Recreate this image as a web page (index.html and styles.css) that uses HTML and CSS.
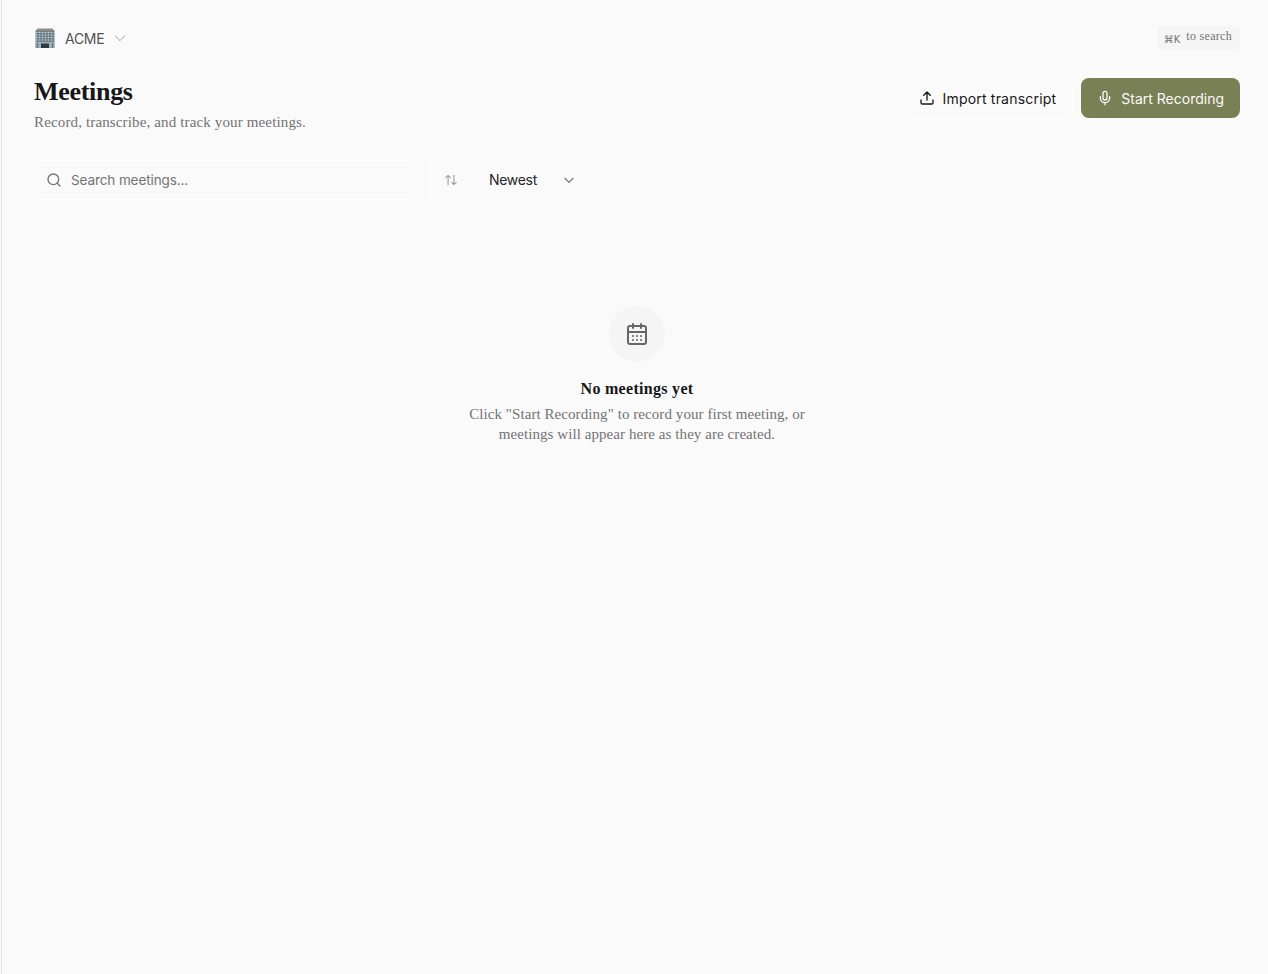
FILE: index.html
```html
<!DOCTYPE html>
<html lang="en">
<head>
    <meta charset="UTF-8">
    <meta name="viewport" content="width=device-width, initial-scale=1.0">
    <title>Meetings</title>
    <link rel="stylesheet" href="styles.css">
</head>
<body>
    <div class="main">
        <div class="topbar">
            <div class="workspace">
                <svg class="building" width="22" height="20" viewBox="0 0 22 20">
                    <rect x="1.5" y="2" width="19" height="18" fill="#7d8c96"/>
                    <rect x="3" y="0.5" width="16" height="2" fill="#948b80"/>
                    <path d="M2 4.5h18M2 7h18M2 9.5h18M2 12h18" stroke="#c3d3dc" stroke-width="1"/>
                    <path d="M4 3v11M7 3v11M10 3v11M13 3v11M16 3v11M19 3v11" stroke="#5b6a73" stroke-width="1"/>
                    <rect x="1.5" y="14" width="19" height="6" fill="#a3b2ba"/>
                    <path d="M3.5 15v5M18.5 15v5" stroke="#66757e" stroke-width="1.5"/>
                    <rect x="7" y="15.5" width="8" height="4.5" fill="#2f3a40"/>
                </svg>
                <span class="workspace-name">ACME</span>
                <svg class="icon chevron-light" width="16" height="16" viewBox="0 0 24 24"><path d="m5 9 7 7 7-7"/></svg>
            </div>
            <div class="search-hint"><span class="keys">⌘K</span> to search</div>
        </div>

        <div class="page-head">
            <div>
                <h1>Meetings</h1>
                <p class="subtitle">Record, transcribe, and track your meetings.</p>
            </div>
            <div class="actions">
                <button class="btn btn-outline">
                    <svg class="icon" width="16" height="16" viewBox="0 0 24 24"><path d="M12 15V3M7 8l5-5 5 5M3 15v4a2 2 0 0 0 2 2h14a2 2 0 0 0 2-2v-4"/></svg>
                    Import transcript
                </button>
                <button class="btn btn-primary">
                    <svg class="icon" width="16" height="16" viewBox="0 0 24 24"><rect x="9" y="2" width="6" height="13" rx="3"/><path d="M19 10v2a7 7 0 0 1-14 0v-2M12 19v3"/></svg>
                    Start Recording
                </button>
            </div>
        </div>

        <div class="filters">
            <div class="search-box">
                <svg class="icon icon-grey" width="16" height="16" viewBox="0 0 24 24"><circle cx="11" cy="11" r="8"/><path d="m21 21-4.3-4.3"/></svg>
                <span class="placeholder">Search meetings...</span>
            </div>
            <div class="sort">
                <svg class="icon icon-light" width="14" height="14" viewBox="0 0 24 24"><path d="M7 20V4M3 8l4-4 4 4M17 4v16M13 16l4 4 4-4"/></svg>
                <span class="sort-label">Newest</span>
                <svg class="icon icon-grey" width="14" height="14" viewBox="0 0 24 24"><path d="m5 9 7 7 7-7"/></svg>
            </div>
        </div>

        <div class="empty">
            <div class="empty-icon">
                <svg class="icon" width="24" height="24" viewBox="0 0 24 24"><path d="M8 2v4M16 2v4"/><rect x="3" y="4" width="18" height="18" rx="2"/><path d="M3 10h18M8 14h.01M12 14h.01M16 14h.01M8 18h.01M12 18h.01M16 18h.01"/></svg>
            </div>
            <h2>No meetings yet</h2>
            <p>Click "Start Recording" to record your first meeting, or<br>meetings will appear here as they are created.</p>
        </div>
    </div>
</body>
</html>
```

FILE: styles.css
```css
html, body {
    height: 100%;
}
body {
    margin: 0;
    background-color: #fafafa;
    font-family: Inter, "Liberation Sans", sans-serif;
    color: #171717;
}
.main {
    box-sizing: border-box;
    height: 100%;
    margin-left: 1px;
    border-left: 1px solid #e5e5e5;
    padding: 26px 28px 0 32px;
}
.icon {
    fill: none;
    stroke: currentColor;
    stroke-width: 2;
    stroke-linecap: round;
    stroke-linejoin: round;
    flex-shrink: 0;
}
.icon-grey {
    color: #737373;
}
.icon-light {
    color: #a3a3a3;
}
.topbar {
    display: flex;
    justify-content: space-between;
    align-items: flex-start;
    height: 52px;
}
.workspace {
    display: flex;
    align-items: center;
    height: 24px;
}
.building {
    margin-right: 9px;
}
.workspace-name {
    font-size: 14px;
    letter-spacing: -0.3px;
    color: #525252;
    margin-right: 8px;
}
.chevron-light {
    color: #a3a3a3;
    stroke-width: 1.5;
}
.search-hint {
    display: flex;
    align-items: center;
    height: 24px;
    padding: 0 8px 3px 7px;
    box-sizing: border-box;
    border-radius: 6px;
    background: #f5f5f5;
    font-family: "Liberation Serif", serif;
    font-size: 12px;
    letter-spacing: 0.3px;
    color: #737373;
}
.keys {
    font-family: "DejaVu Sans", sans-serif;
    font-size: 10px;
    letter-spacing: 0;
    margin-right: 6px;
    position: relative;
    top: 3px;
}
.page-head {
    display: flex;
    justify-content: space-between;
    align-items: flex-start;
}
h1 {
    margin: 0;
    font-family: "Liberation Serif", serif;
    font-size: 26px;
    line-height: 28px;
    font-weight: 700;
    letter-spacing: -0.3px;
}
.subtitle {
    margin: 6px 0 0;
    font-family: "Liberation Serif", serif;
    font-size: 15px;
    line-height: 20px;
    letter-spacing: 0.14px;
    color: #737373;
}
.actions {
    display: flex;
    gap: 8px;
}
.btn {
    display: flex;
    align-items: center;
    gap: 8px;
    height: 40px;
    padding: 0 16px;
    border-radius: 8px;
    font-family: inherit;
    font-size: 14px;
    cursor: pointer;
}
.btn-outline {
    border: 1px solid #fff;
    background: #fafafa;
    color: #171717;
    letter-spacing: 0.2px;
    padding-left: 17px;
    gap: 7px;
}
.btn-primary {
    border: none;
    background: #7a8055;
    color: #fafafa;
}
.filters {
    display: flex;
    align-items: center;
    gap: 12px;
    margin-top: 26px;
}
.search-box {
    box-sizing: border-box;
    display: flex;
    align-items: center;
    gap: 9px;
    width: 385px;
    height: 40px;
    padding: 0 11px;
    border: 1px solid #fff;
    border-radius: 8px;
}
.placeholder {
    font-size: 13.5px;
    letter-spacing: -0.1px;
    color: #737373;
}
.sort {
    box-sizing: border-box;
    display: flex;
    align-items: center;
    width: 160px;
    height: 44px;
    margin-left: -1px;
    padding: 0 13px 0 13px;
    border: 1px solid #fff;
    border-radius: 12px;
}
.sort-label {
    margin-left: 31px;
    padding-bottom: 1px;
    font-size: 14px;
    letter-spacing: -0.3px;
    color: #262626;
}
.sort .icon-grey {
    margin-left: auto;
}
.empty {
    display: flex;
    flex-direction: column;
    align-items: center;
    margin-top: 104px;
    text-align: center;
}
.empty-icon {
    display: flex;
    align-items: center;
    justify-content: center;
    width: 56px;
    height: 56px;
    border-radius: 50%;
    background: #f5f5f5;
    color: #666;
}
h2 {
    margin: 16px 0 0;
    font-family: "Liberation Serif", serif;
    font-size: 16px;
    line-height: 22px;
    font-weight: 700;
    letter-spacing: 0.3px;
}
.empty p {
    margin: 4px 0 0;
    font-family: "Liberation Serif", serif;
    font-size: 15px;
    line-height: 20px;
    letter-spacing: 0.07px;
    color: #737373;
}
```
